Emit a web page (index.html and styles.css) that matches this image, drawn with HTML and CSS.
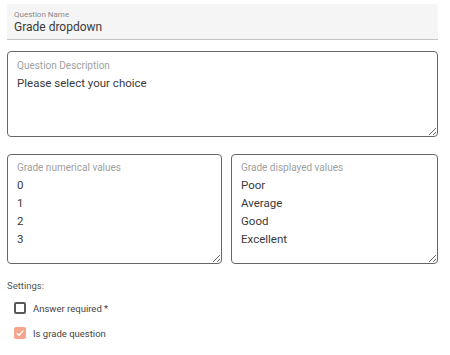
FILE: index.html
```html
<!DOCTYPE html>
<html lang="en">
<head>
    <meta charset="UTF-8">
    <meta name="viewport" content="width=device-width, initial-scale=1.0">
    <title>Grade question</title>
    <link rel="stylesheet" href="styles.css">
</head>
<body>
    <div class="container">
        <div class="filled-field">
            <label for="question_name">Question Name</label>
            <input type="text" id="question_name" value="Grade dropdown">
        </div>

        <div class="outlined-field description">
            <label for="question_desc">Question Description</label>
            <textarea id="question_desc">Please select your choice</textarea>
        </div>

        <div class="grade-row">
            <div class="outlined-field grade grade-values">
                <label for="grade_values">Grade numerical values</label>
                <textarea id="grade_values">0
1
2
3</textarea>
            </div>
            <div class="outlined-field grade grade-labels">
                <label for="grade_labels">Grade displayed values</label>
                <textarea id="grade_labels">Poor
Average
Good
Excellent</textarea>
            </div>
        </div>

        <div class="settings">
            <p class="settings-title">Settings:</p>
            <label class="check">
                <span class="box"></span>
                Answer required *
            </label>
            <label class="check">
                <span class="box checked">
                    <svg width="10" height="10" viewBox="0 0 10 10"><path d="M1.8 5.2 L4 7.3 L8.3 2.6" fill="none" stroke="#fff" stroke-width="1.4"/></svg>
                </span>
                Is grade question
            </label>
        </div>
    </div>
</body>
</html>
```

FILE: styles.css
```css
body {
    font-family: Roboto, "Liberation Sans", sans-serif;
    background-color: white;
    color: #3a3a3a;
    margin: 0;
    padding: 4px 12px 0 7px;
}

.container {
    width: 431px;
}

.filled-field {
    background-color: #f5f5f5;
    border-bottom: 1px solid #c4c4c4;
    height: 36px;
    padding: 6px 7px 0;
    box-sizing: border-box;
    border-radius: 3px 3px 0 0;
}

.filled-field label {
    display: block;
    font-size: 8px;
    color: #8a8a8a;
    line-height: 10px;
}

.filled-field input {
    display: block;
    border: none;
    background: transparent;
    font-family: inherit;
    font-size: 12px;
    color: #3a3a3a;
    padding: 0;
    margin: 0;
    width: 100%;
    height: 14px;
    line-height: 14px;
    outline: none;
}

.outlined-field {
    border: 1px solid #666;
    border-radius: 4px;
    box-sizing: border-box;
    display: flex;
    flex-direction: column;
    padding: 7px 0 0 9px;
}

.outlined-field label {
    font-size: 10px;
    color: #a0a0a0;
    line-height: 13px;
}

.outlined-field textarea {
    flex: 1;
    border: none;
    outline: none;
    resize: vertical;
    font-family: inherit;
    font-size: 11.5px;
    color: #3a3a3a;
    padding: 0;
    margin: 0;
    background: transparent;
    line-height: 18px;
}

.description {
    margin-top: 11px;
    height: 86px;
}

.description label {
    margin-bottom: 2px;
}

.grade-row {
    display: flex;
    gap: 9px;
    margin-top: 17px;
}

.grade {
    height: 110px;
    padding-top: 6px;
}

.grade-values {
    width: 215px;
}

.grade-labels {
    width: 207px;
}

.grade label {
    margin-bottom: 2px;
}

.settings {
    margin-top: 16px;
    font-size: 9.5px;
    color: #555;
}

.settings-title {
    margin: 0 0 10px;
    line-height: 12px;
}

.check {
    display: flex;
    align-items: center;
    gap: 7px;
    height: 12px;
    margin: 0 0 13px 7px;
    color: #444;
}

.box {
    width: 12px;
    height: 12px;
    box-sizing: border-box;
    border: 2px solid #5a5a5a;
    border-radius: 2px;
    display: flex;
    align-items: center;
    justify-content: center;
}

.box.checked {
    border: none;
    background-color: #f5a58b;
}
```
